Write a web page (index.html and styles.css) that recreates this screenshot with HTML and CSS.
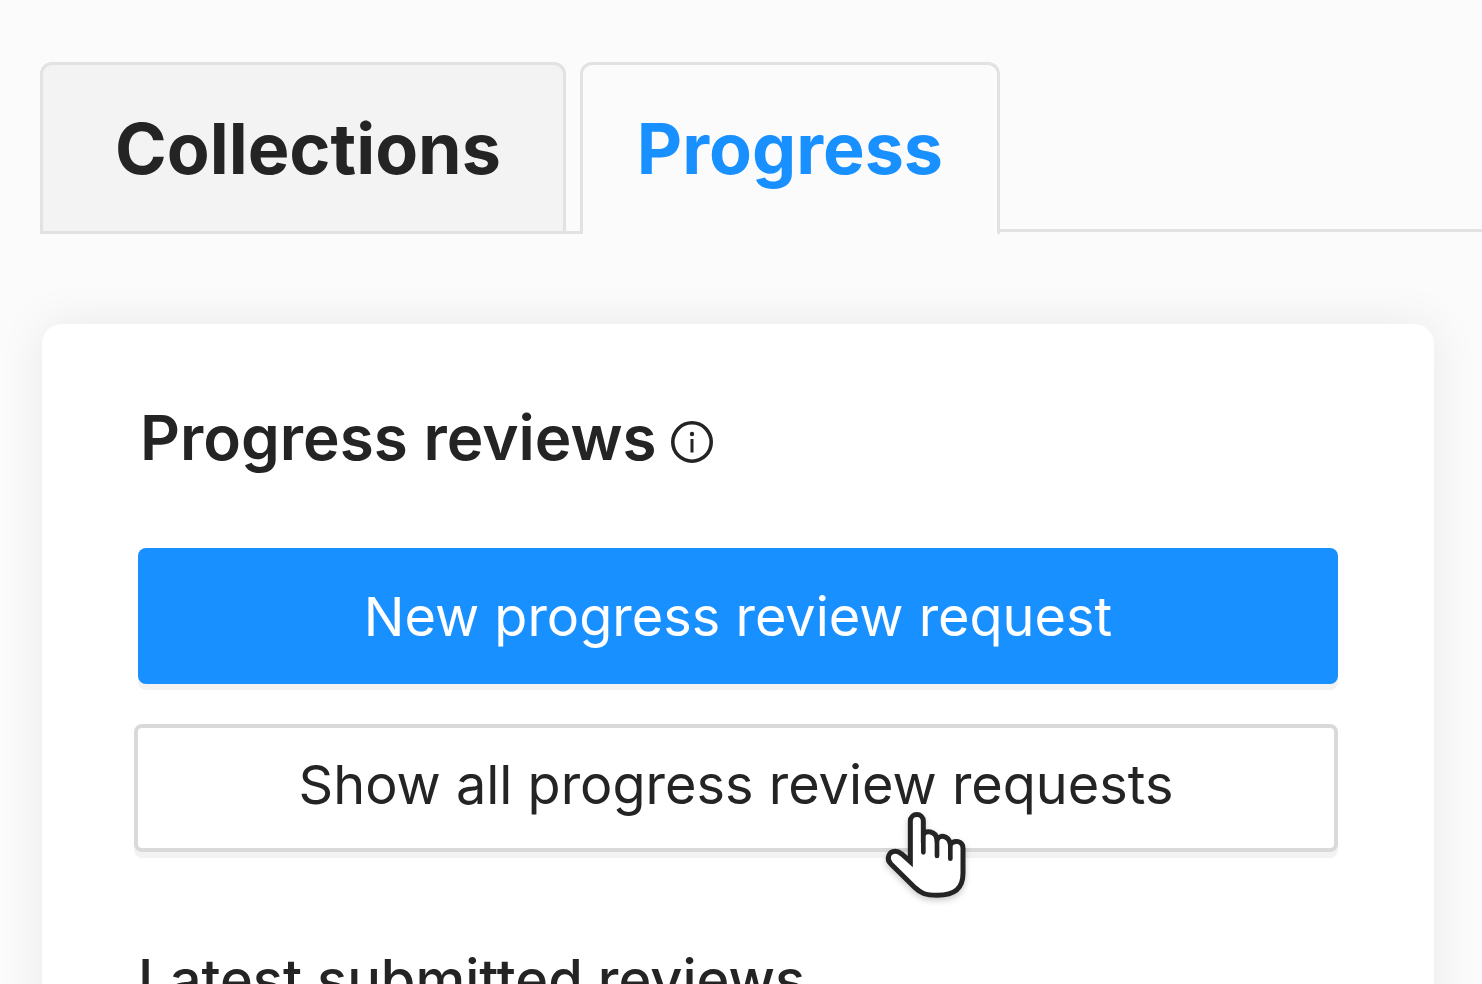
FILE: index.html
```html
<!DOCTYPE html>
<html lang="en">
<head>
    <meta charset="UTF-8">
    <meta name="viewport" content="width=device-width, initial-scale=1.0">
    <title>Progress</title>
    <link rel="stylesheet" href="styles.css">
</head>
<body>

<nav class="tabs">
    <a href="#collections" class="tab">Collections</a>
    <div class="tab-gap"></div>
    <a href="#progress" class="tab active">Progress</a>
    <div class="tab-line"></div>
</nav>

<main class="card">
    <div class="card-header">
        <h1>Progress reviews</h1>
        <svg class="info-icon" viewBox="0 0 42 42" aria-label="Info">
            <circle cx="21" cy="21" r="19.2" fill="none" stroke="#242424" stroke-width="3.6"/>
            <circle cx="21" cy="13" r="2.2" fill="#242424"/>
            <path d="M21 18v13.5" stroke="#242424" stroke-width="3"/>
        </svg>
    </div>

    <div class="actions">
        <button type="button" class="button primary">New progress review request</button>
        <button type="button" class="button secondary">Show all progress review requests
            <svg class="cursor" viewBox="60 51 291 300" aria-hidden="true">
                <path d="M151 215V94C151 67 190 67 190 94V133C197 122 227 120 231 149C238 134 266 134 271 163C283 148 309 153 309 175V250C309 295 285 316 232 316C195 316 182 309 165 293L92 221C78 207 86 184 106 184C114 184 120 188 125 192Z" fill="#fff" stroke="#242424" stroke-width="15"/>
                <path d="M190 130V187M231 145V198M271 158V206" stroke="#242424" stroke-width="14" stroke-linecap="round"/>
            </svg>
        </button>
    </div>

    <h2>Latest submitted reviews</h2>
</main>

</body>
</html>
```
FILE: styles.css
```css
* {
    box-sizing: border-box;
}

body {
    margin: 0;
    padding: 62px 0 0 40px;
    height: 100vh;
    overflow: hidden;
    background-color: #fbfbfb;
    color: #242424;
    font-family: Inter, sans-serif;
}

.tabs {
    display: flex;
}

.tab {
    height: 172px;
    padding: 0 62px 0 72px;
    border: 3px solid #e2e2e2;
    border-radius: 12px 12px 0 0;
    background-color: #f3f3f3;
    color: #242424;
    font-size: 70px;
    font-weight: 700;
    line-height: 168px;
    text-decoration: none;
}

.tab-gap {
    width: 14px;
    border-bottom: 3px solid #e2e2e2;
}

.tab.active {
    padding: 0 54px;
    border-bottom: none;
    background-color: #fbfbfb;
    color: #1890ff;
}

.tab-line {
    flex: 1;
    height: 170px;
    border-bottom: 3px solid #e2e2e2;
}

.card {
    margin: 90px 48px 0 2px;
    padding: 72px 96px;
    border-radius: 20px;
    background-color: #fff;
    box-shadow: 0 0 48px rgba(0, 0, 0, 0.08);
}

.card-header {
    display: flex;
    align-items: center;
    gap: 14px;
    padding-left: 2px;
}

h1 {
    margin: 0;
    font-size: 62px;
    font-weight: 600;
    line-height: 84px;
}

.info-icon {
    width: 42px;
    height: 42px;
    margin-top: 8px;
}

.actions {
    display: flex;
    flex-direction: column;
    gap: 40px;
    margin-top: 68px;
}

.button {
    position: relative;
    height: 136px;
    border: none;
    border-radius: 8px;
    box-shadow: 0 6px 0 rgba(0, 0, 0, 0.05);
    color: #242424;
    font-family: inherit;
    font-size: 54px;
    cursor: pointer;
}

.primary {
    background-color: #1890ff;
    color: #fff;
}

.secondary {
    height: 128px;
    margin-left: -4px;
    padding-bottom: 8px;
    border: 4px solid #d9d9d9;
    background-color: #fff;
}

/* hand pointer over the button */
.cursor {
    position: absolute;
    left: calc(50% + 144px);
    top: 79px;
    width: 97px;
    height: 100px;
    filter: drop-shadow(0 3px 3px rgba(0, 0, 0, 0.2));
}

h2 {
    margin: 92px 0 0;
    font-size: 56px;
    font-weight: 500;
    line-height: 72px;
}
```
